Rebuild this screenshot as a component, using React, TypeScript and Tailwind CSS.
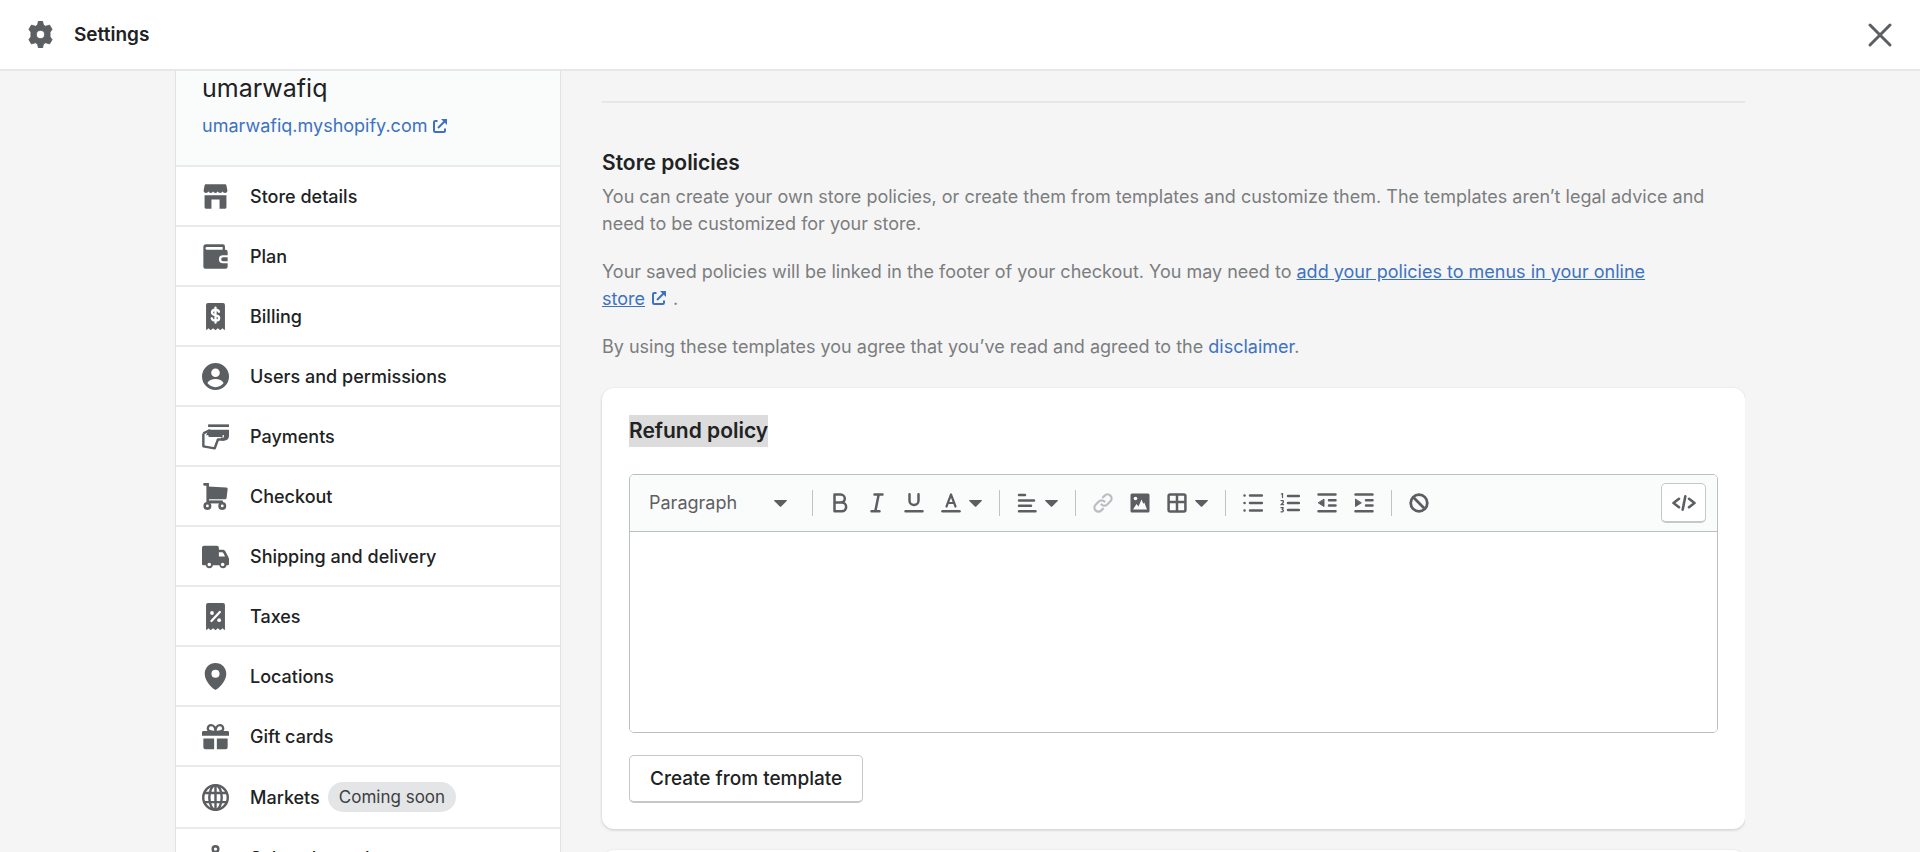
import React from "react";

type IconProps = { children: React.ReactNode; size?: string };

function Icon({ children, size = "size-[27px]" }: IconProps) {
  return (
    <svg viewBox="0 0 20 20" fill="currentColor" aria-hidden="true" className={`shrink-0 ${size}`}>
      {children}
    </svg>
  );
}

const receipt =
  "M3 1.4A1.4 1.4 0 0 1 4.400 0h11.200A1.400 1.400 0 0 1 17 1.400V19.500q0 .5-.5.5l-1.200-1.300L13.700 20h-.4l-1.500-1.300L10.200 20h-.4l-1.600-1.300L6.700 20h-.4l-1.600-1.300L3.500 20Q3 20 3 19.500z";

const icons: Record<string, React.ReactNode> = {
  store: (
    <>
      <path d="M2.900 1h14.200c.5 0 .9.3 1 .8l.7 3.700c.1 1-.7 1.900-1.700 1.900-.9 0-1.700-.6-1.900-1.300-.2.700-.9 1.300-1.700 1.300s-1.600-.6-1.800-1.300c-.2.700-.9 1.300-1.700 1.300s-1.600-.6-1.800-1.300c-.2.700-.9 1.300-1.700 1.300s-1.500-.6-1.700-1.300C4.500 6.800 3.800 7.400 2.900 7.400c-1 0-1.800-.9-1.700-1.900l.7-3.700c.1-.5.5-.8 1-.8z" />
      <path d="M1.900 9h16.200v9a1 1 0 0 1-1 1H13v-6.800H7V19H2.900a1 1 0 0 1-1-1z" />
    </>
  ),
  plan: (
    <path
      fillRule="evenodd"
      d="M3 1h12.500A1.500 1.500 0 0 1 17 2.500V5h.5A1.500 1.500 0 0 1 19 6.500V9h-3.500a3 3 0 0 0 0 6H19v2.500a1.500 1.500 0 0 1-1.500 1.500h-15A1.500 1.500 0 0 1 1 17.500V3a2 2 0 0 1 2-2zm.6 1.900a.9.900 0 0 0 0 2.100H15.300V2.900zM15.700 10.500H19v3h-3.300a1.500 1.500 0 0 1 0-3z"
    />
  ),
  billing: (
    <>
      <path d={receipt} />
      <path
        d="M10 3.400v11.200M12.600 6.500C12.200 5.500 11.200 5 10 5 8.500 5 7.400 5.800 7.400 7c0 2.700 5.300 1.400 5.300 4.100 0 1.200-1.200 2-2.700 2-1.400 0-2.500-.7-2.800-1.800"
        fill="none"
        stroke="#fff"
        strokeWidth="1.700"
        strokeLinecap="round"
      />
    </>
  ),
  users: (
    <path
      fillRule="evenodd"
      d="M10 0a10 10 0 1 1 0 20 10 10 0 0 1 0-20zm0 4a3.200 3.200 0 1 0 0 6.400A3.200 3.200 0 0 0 10 4zm0 7.900c-2.700 0-5 1-6 3A8 8 0 0 0 10 18a8 8 0 0 0 6-3.100c-1-2-3.300-3-6-3z"
    />
  ),
  payments: (
    <>
      <path d="M4.500 1H20v2H4.500z" />
      <path d="M5 5h15v4.500c0 2-1 3.300-3 3.500h-2.600l-.6-2.200h2.400V8.800H6L3 9z" />
      <path
        d="M1 7.700 5.600 5.500V9.400h9.700M1 7.700v9.600l8.400 1.500 2.400-6.600h4.800"
        fill="none"
        stroke="currentColor"
        strokeWidth="1.800"
        strokeLinejoin="round"
      />
    </>
  ),
  checkout: (
    <>
      <path d="M4.300 2.500 18 3.400a1 1 0 0 1 1 1.200l-.8 6.500a1 1 0 0 1-1 .9H4.300z" />
      <path d="M1.800 1H4.200V14H14.500" fill="none" stroke="currentColor" strokeWidth="1.900" strokeLinecap="round" />
      <circle cx="4" cy="17" r="2" fill="none" stroke="currentColor" strokeWidth="1.900" />
      <circle cx="15" cy="17" r="2" fill="none" stroke="currentColor" strokeWidth="1.900" />
      <path d="M4 13.200h11.500v1.800H4z" />
    </>
  ),
  shipping: (
    <path
      fillRule="evenodd"
      d="M1.500 2H11a1.500 1.500 0 0 1 1.500 1.500V5h2.700c1 0 1.800.5 2.200 1.300l2.200 4.200c.3.500.4 1 .4 1.500v3.500a1 1 0 0 1-1 1h-.8a2.700 2.700 0 0 1-5.300 0H8.100a2.700 2.700 0 0 1-5.300 0H1a1 1 0 0 1-1-1v-12A1.500 1.500 0 0 1 1.500 2zm11 4.800V10h4.600l-1.300-2.600a1.100 1.100 0 0 0-1-.6zM5.400 14.600a1.300 1.300 0 1 0 0 2.700 1.300 1.300 0 0 0 0-2.700zm9.900 0a1.300 1.300 0 1 0 0 2.700 1.300 1.300 0 0 0 0-2.700z"
    />
  ),
  taxes: (
    <>
      <path d={receipt} />
      <path d="M7 13.300 13.200 6.700" stroke="#fff" strokeWidth="1.700" strokeLinecap="round" />
      <circle cx="7.400" cy="7.400" r="1.400" fill="#fff" />
      <circle cx="12.700" cy="12.700" r="1.400" fill="#fff" />
    </>
  ),
  locations: (
    <path fillRule="evenodd" d="M10 0c4.500 0 8 3.500 8 8 0 6.500-7.400 12-8 12S2 14.500 2 8c0-4.500 3.500-8 8-8zm0 5a3 3 0 1 0 0 6 3 3 0 0 0 0-6z" />
  ),
  gift: (
    <>
      <path d="M1 6h18a1 1 0 0 1 1 1v2.500H0V7a1 1 0 0 1 1-1zM1 11.500h8V19.500H2.500A1.500 1.500 0 0 1 1 18zM11 11.500h8V18a1.500 1.500 0 0 1-1.500 1.500H11z" />
      <path
        d="M10 6.500C8 6.700 4.300 6.500 4.300 4c0-1.500 1-2.500 2.500-2.500C9 1.500 10 4 10 6.500zM10 6.500c2 .2 5.700 0 5.700-2.500 0-1.500-1-2.500-2.500-2.500C11 1.500 10 4 10 6.500z"
        fill="none"
        stroke="currentColor"
        strokeWidth="1.700"
      />
    </>
  ),
  markets: (
    <g fill="none" stroke="currentColor" strokeWidth="1.800">
      <circle cx="10" cy="10" r="9.100" />
      <ellipse cx="10" cy="10" rx="4.600" ry="9.100" />
      <path d="M10 1v18M1.900 6.600h16.200M1.900 13.400h16.200" />
    </g>
  ),
  channels: (
    <g fill="none" stroke="currentColor" strokeWidth="1.800">
      <circle cx="10" cy="3" r="2.100" />
      <path d="M10 5v5M10 10l-5 4M10 10l5 4" />
      <circle cx="4" cy="16" r="2.100" />
      <circle cx="16" cy="16" r="2.100" />
    </g>
  ),
};

const navItems = [
  { label: "Store details", icon: "store" },
  { label: "Plan", icon: "plan" },
  { label: "Billing", icon: "billing" },
  { label: "Users and permissions", icon: "users" },
  { label: "Payments", icon: "payments" },
  { label: "Checkout", icon: "checkout" },
  { label: "Shipping and delivery", icon: "shipping" },
  { label: "Taxes", icon: "taxes" },
  { label: "Locations", icon: "locations" },
  { label: "Gift cards", icon: "gift" },
  { label: "Markets", icon: "markets", badge: "Coming soon" },
  { label: "Sales channels", icon: "channels" },
];

function ExternalIcon() {
  return (
    <svg viewBox="0 0 14 14" aria-hidden="true" className="inline-block size-3.5 shrink-0 align-baseline" fill="none" stroke="currentColor" strokeWidth="2">
      <path d="M4.500 2H2.200Q1 2 1 3.200V11.800Q1 13 2.200 13H10.800Q12 13 12 11.800V9.500" />
      <path d="M5 9 12 2" />
      <path d="M8 0H14V6z" fill="currentColor" stroke="none" />
    </svg>
  );
}

function Caret() {
  return (
    <svg viewBox="0 0 13 7" aria-hidden="true" className="h-[7px] w-[13px] shrink-0" fill="currentColor">
      <path d="M.6 0h11.800q.9.200.3.900L7.200 6.500q-.7.700-1.400 0L.3.900Q-.3.200.6 0z" />
    </svg>
  );
}

function Divider() {
  return <span className="h-[26px] w-px shrink-0 bg-[#c0c3c5]" />;
}

function Tool({ label, children, disabled, caret }: { label: string; children: React.ReactNode; disabled?: boolean; caret?: boolean }) {
  return (
    <button type="button" aria-label={label} disabled={disabled} className="flex items-center gap-2 text-[#5c5f62] disabled:text-[#babec3]">
      <svg viewBox="0 0 20 20" aria-hidden="true" className="size-5 shrink-0" fill="none" stroke="currentColor" strokeWidth="2.500" strokeLinecap="round" strokeLinejoin="round">
        {children}
      </svg>
      {caret && <Caret />}
    </button>
  );
}

function Toolbar() {
  return (
    <div role="toolbar" aria-label="Formatting" className="flex min-h-[57px] flex-wrap items-center justify-between border-b border-[#babfc3] bg-[#fafbfb] pr-[11px] pl-[19px]">
      <div className="flex flex-wrap items-center gap-[17px]">
        <button type="button" className="mr-2 flex w-[138px] items-center justify-between text-lg text-[#5c5f62]">
          Paragraph
          <Caret />
        </button>
        <Divider />
        <div className="flex items-center gap-[17px]">
          <Tool label="Bold">
            <path d="M4.500 1.600h6.300a3.900 3.900 0 0 1 0 8H4.500zM4.500 9.600h7.300a4.300 4.300 0 0 1 0 8.700H4.500z" />
          </Tool>
          <Tool label="Italic">
            <path d="M7.500 1.600h8M4.500 18.300h8M11.700 1.600 8.300 18.300" />
          </Tool>
          <Tool label="Underline">
            <path d="M5.500 1.200v6.300a4.500 4.500 0 0 0 9 0V1.200M1.500 18.300h17" />
          </Tool>
          <Tool label="Text color" caret>
            <path d="M5.500 13.500 10 1.500l4.500 12M7 10h6" strokeWidth="2.200" />
            <path d="M1.500 18.300h17" />
          </Tool>
        </div>
        <Divider />
        <Tool label="Alignment" caret>
          <path d="M2 2h6M2 7.400h15M2 12.800h12M2 18.200h16.500" />
        </Tool>
        <Divider />
        <div className="flex items-center gap-[17px]">
          <Tool label="Insert link" disabled>
            <path d="M8.500 11.500a4 4 0 0 0 5.700 0l3.200-3.200a4 4 0 0 0-5.700-5.700L10 4.300M11.500 8.500a4 4 0 0 0-5.700 0l-3.200 3.200a4 4 0 0 0 5.700 5.700L10 15.700" strokeWidth="2.200" />
          </Tool>
          <Tool label="Insert image">
            <rect x=".5" y=".5" width="19" height="19" rx="1.500" fill="currentColor" stroke="none" />
            <circle cx="5.500" cy="5.500" r="1.800" fill="#fafbfb" stroke="none" />
            <path d="M3 16.500 6.500 11 8.500 13.500 11.500 6.500 13.300 10.800 14.300 9.500 17 16.500z" fill="#fafbfb" stroke="none" />
          </Tool>
          <Tool label="Insert table" caret>
            <rect x="1.600" y="1.600" width="16.800" height="16.800" rx="1.500" />
            <path d="M10 2v16M2 9h16" />
          </Tool>
        </div>
        <Divider />
        <div className="flex items-center gap-[17px]">
          <Tool label="Bulleted list">
            <path d="M7 2.500h12M7 10h12M7 17.500h12M1.500 2.500h.1M1.500 10h.1M1.500 17.500h.1" />
          </Tool>
          <Tool label="Numbered list">
            <path d="M8 3h11M8 10h11M8 17h11" />
            <path d="M1.400 1 2.500.6v4M1 7.600h2.300V9.500L1 11.700h2.500M1 14.700h2.300L2.200 16.500q1.200 0 1.200 1.200T1 18.800" strokeWidth="1.300" />
          </Tool>
          <Tool label="Outdent">
            <path d="M1.500 1.600h17M12 7.200h6.500M12 12.600h6.500M1.500 18.300h17" />
            <path d="M7 6.500v7L1.500 10z" fill="currentColor" strokeWidth="1" />
          </Tool>
          <Tool label="Indent">
            <path d="M1.500 1.600h17M12 7.200h6.500M12 12.600h6.500M1.500 18.300h17" />
            <path d="M1.500 6.500v7L7 10z" fill="currentColor" strokeWidth="1" />
          </Tool>
        </div>
        <Divider />
        <Tool label="Clear formatting">
          <circle cx="10" cy="10" r="8.300" strokeWidth="2.800" />
          <path d="M4.300 4.300 15.700 15.700" strokeWidth="2.800" />
        </Tool>
      </div>
      <button type="button" aria-label="Show HTML" className="flex h-10 w-[45px] items-center justify-center rounded-[5px] border border-b-2 border-[#c4c8cb] bg-white text-[#5c5f62]">
        <svg viewBox="0 0 24 16" aria-hidden="true" className="h-4 w-6" fill="none" stroke="currentColor" strokeWidth="2.600" strokeLinecap="round" strokeLinejoin="round">
          <path d="M7 3.800 1.500 8 7 12.200M17 3.800 22.500 8 17 12.200M13.300 1.400 10.700 14.600" />
        </svg>
      </button>
    </div>
  );
}

export default function App() {
  return (
    <div className="flex h-screen flex-col overflow-hidden bg-[#f5f5f5] font-[Inter,'Liberation_Sans',sans-serif] text-lg leading-[27px] text-[#202223]">
      <header className="flex h-[71px] shrink-0 items-center justify-between border-b-2 border-[#e6e7e8] bg-white px-[27px]">
        <div className="flex items-center gap-5 text-[#5c5f62]">
          <Icon>
            <path
              fillRule="evenodd"
              d="M8.500 0h3l.7 3 1.600.9 2.900-.9 1.900 3.200-1.500 2.100v3.400l1.500 2.100-1.900 3.200-2.900-.9-1.600.9-.7 3h-3l-.7-3-1.600-.9-2.900.9-1.900-3.200 1.500-2.100V8.300L1.400 6.200 3.300 3l2.900.9L7.800 3zM10 7a3 3 0 1 0 0 6 3 3 0 0 0 0-6z"
              stroke="currentColor"
              strokeWidth=".6"
              strokeLinejoin="round"
            />
          </Icon>
          <h1 className="text-[19px] font-semibold text-[#202223]">Settings</h1>
        </div>
        <button type="button" aria-label="Close settings" className="text-[#5c5f62]">
          <svg viewBox="0 0 26 26" aria-hidden="true" className="size-[26px]" fill="none" stroke="currentColor" strokeWidth="3" strokeLinecap="round">
            <path d="M3 3 23 23M23 3 3 23" />
          </svg>
        </button>
      </header>

      <div className="mx-auto flex min-h-0 w-full max-w-[1570px] flex-1 gap-[41px] overflow-hidden">
        <aside className="w-[386px] shrink-0 border-x border-[#e1e2e3] bg-white">
          <div className="bg-[#fafbfb] px-[26px] pb-[26px]">
            <p className="text-[25px] leading-[34px]">umarwafiq</p>
            <a href="#store" className="mt-[7px] flex items-center gap-[6px] text-[#3d72c2]">
              umarwafiq.myshopify.com
              <ExternalIcon />
            </a>
          </div>
          <nav aria-label="Settings">
            <ul>
              {navItems.map((item) => (
                <li key={item.label} className="border-t-2 border-[#e9eaeb]">
                  <a href="#section" className="flex min-h-[58px] items-center gap-[21px] px-[26px] py-[15px] font-medium">
                    <span className="flex text-[#5c5f62]">
                      <Icon>{icons[item.icon]}</Icon>
                    </span>
                    <span className="flex items-center gap-2">
                      {item.label}
                      {item.badge && (
                        <span className="rounded-full bg-[#e4e5e7] px-[11px] py-px text-[17px] leading-7 font-normal text-[#3c3e40]">{item.badge}</span>
                      )}
                    </span>
                  </a>
                </li>
              ))}
            </ul>
          </nav>
        </aside>

        <main className="min-w-0 flex-1 pt-[30px]">
          <section className="border-t-2 border-[#e6e7e8] pt-[46px]">
            <h2 className="text-[21px] leading-[27px] font-semibold">Store policies</h2>
            <div className="mt-[7px] flex flex-col gap-[21px] pr-7 text-[#7b7d7f]">
              <p>
                You can create your own store policies, or create them from templates and customize them. The templates aren’t legal advice and
                need to be customized for your store.
              </p>
              <p>
                Your saved policies will be linked in the footer of your checkout. You may need to{" "}
                <a href="#menus" className="text-[#3d72c2] underline">
                  add your policies to menus in your online{" "}
                </a>
                <span className="whitespace-nowrap">
                  <a href="#menus" className="text-[#3d72c2]">
                    <span className="mr-[7px] underline">store</span>
                    <ExternalIcon />
                  </a>
                  <span className="ml-[7px]">.</span>
                </span>
              </p>
              <p>
                By using these templates you agree that you’ve read and agreed to the{" "}
                <a href="#disclaimer" className="text-[#3d72c2]">
                  disclaimer
                </a>
                .
              </p>
            </div>
          </section>

          <section className="mt-7 rounded-xl bg-white px-[27px] pt-[27px] pb-[26px] shadow-[0_1px_3px_rgba(23,24,24,0.2)]">
            <h2 className="text-[21px] leading-8 font-semibold">
              <span className="inline-block bg-[#dcdcdc]">Refund policy</span>
            </h2>
            <div className="mt-[27px] overflow-hidden rounded-[5px] border border-[#babfc3]">
              <Toolbar />
              <textarea aria-label="Refund policy" className="block h-[200px] w-full resize-none bg-white px-5 py-4 outline-none" />
            </div>
            <button type="button" className="mt-[22px] h-12 rounded-[5px] border border-b-2 border-[#c4c8cb] bg-white px-5 text-[19px] font-medium">
              Create from template
            </button>
          </section>
          <section className="mt-[21px] h-40 rounded-xl bg-white shadow-[0_1px_3px_rgba(23,24,24,0.2)]" />
        </main>
      </div>
    </div>
  );
}
